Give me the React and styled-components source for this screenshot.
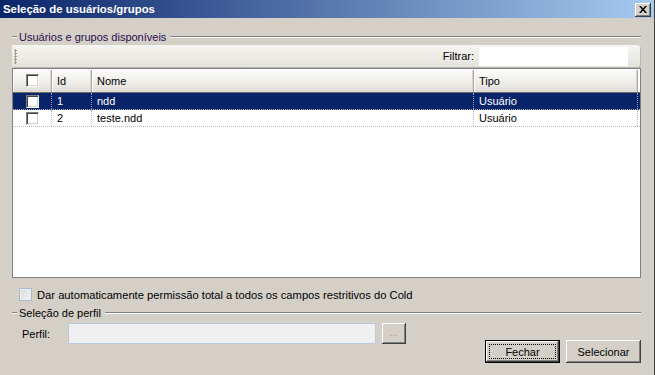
import React from 'react';
import styled, { createGlobalStyle, css } from 'styled-components';

const FACE = '#d4d0c8';
const SELECTED = '#0a246a';

const GlobalStyle = createGlobalStyle`
  html, body {
    margin: 0;
    padding: 0;
    background: ${FACE};
  }
  body {
    font-family: "Liberation Sans", Arial, sans-serif;
    font-size: 11px;
    color: #000;
  }
`;

const raised = css`
  box-shadow: inset -1px -1px #404040, inset 1px 1px #fff,
    inset -2px -2px #808080, inset 2px 2px ${FACE};
`;

const Window = styled.div`
  width: 655px;
  height: 375px;
  box-sizing: border-box;
  background: ${FACE};
  border-right: 1px solid #404040;
  display: flex;
  flex-direction: column;
  overflow: hidden;
`;

const TitleBar = styled.div`
  height: 18px;
  flex: none;
  display: flex;
  align-items: center;
  justify-content: space-between;
  padding: 0 3px 0 3px;
  background: linear-gradient(to right, #0a246a, #a6caf0);
`;

const Title = styled.span`
  color: #fff;
  font-weight: bold;
  font-size: 11.4px;
`;

const CloseButton = styled.div`
  width: 16px;
  height: 14px;
  background: ${FACE};
  ${raised};
  display: flex;
  align-items: center;
  justify-content: center;
  margin-top: 1px;
`;

const Body = styled.div`
  flex: 1;
  display: flex;
  flex-direction: column;
  padding: 12px 13px 0 12px;
`;

const GroupHeader = styled.div`
  display: flex;
  align-items: center;
  height: 14px;
  gap: 2px;
  color: ${p => p.$tint || '#000'};

  &::before {
    content: '';
    width: 5px;
    border-top: 1px solid #808080;
    border-bottom: 1px solid #fff;
  }

  &::after {
    content: '';
    flex: 1;
    margin-left: 2px;
    border-top: 1px solid #808080;
    border-bottom: 1px solid #fff;
  }
`;

const ToolStrip = styled.div`
  margin-top: 1px;
  height: 22px;
  display: flex;
  align-items: center;
  justify-content: space-between;
  background: linear-gradient(to bottom, #f6f5f1, #e4e2db);
  border-radius: 0 3px 3px 0;
  box-shadow: 1px 1px 0 #b8b5ac;
  margin-right: 1px;
`;

const Grip = styled.div`
  width: 3px;
  height: 15px;
  margin-left: 2px;
  background: radial-gradient(circle, #a09d94 1px, transparent 1.2px) 0 0 / 3px 3px;
`;

const FilterGroup = styled.div`
  display: flex;
  align-items: center;
  gap: 5px;
  padding-right: 12px;
`;

const FilterInput = styled.div`
  width: 149px;
  height: 19px;
  background: #fff;
`;

const Grid = styled.div`
  height: 210px;
  box-sizing: border-box;
  margin-top: 1px;
  border: 1px solid #808080;
  background: #fff;
  display: flex;
  flex-direction: column;
`;

const COLS = '39px 40px 382px 164px';

const HeaderRow = styled.div`
  display: grid;
  grid-template-columns: ${COLS};
  height: 23px;
  border-bottom: 1px solid #6e6d68;
`;

const HeaderCell = styled.div`
  display: flex;
  align-items: center;
  justify-content: ${p => (p.$center ? 'center' : 'flex-start')};
  padding-left: ${p => (p.$center ? 0 : '5px')};
  background: linear-gradient(to bottom, #fdfdfc, #ebe9e3 70%, #dedcd5);
  box-shadow: inset 1px 1px #fff, inset -1px 0 #a7a59e, inset -2px 0 #d9d7d0;
`;

const Row = styled.div`
  display: grid;
  grid-template-columns: ${COLS};
  height: 16px;
  background: ${p => (p.$selected ? SELECTED : '#fff')};
  color: ${p => (p.$selected ? '#fff' : '#000')};
  border-bottom: 1px dotted #b8b8b8;
`;

const Cell = styled.div`
  display: flex;
  align-items: center;
  justify-content: ${p => (p.$center ? 'center' : 'flex-start')};
  padding-left: ${p => (p.$center ? 0 : '5px')};
  border-right: 1px dotted ${p => (p.$selected ? '#9aa4c8' : '#b8b8b8')};
`;

const CheckBox = styled.span`
  display: inline-block;
  width: 11px;
  height: 11px;
  background: #fff;
  border: 1px solid;
  border-color: #808080 #fff #fff #808080;
  box-shadow: inset 1px 1px #404040, inset -1px -1px ${FACE};
`;

const FlatCheck = styled.span`
  display: inline-block;
  box-sizing: border-box;
  width: 13px;
  height: 13px;
  border: 1px solid #a8b8d0;
  background: linear-gradient(135deg, #d8d8d8, #f4f4f4);
  box-shadow: inset 0 0 0 1px #eef0f4;
`;

const OptionRow = styled.label`
  display: flex;
  align-items: center;
  gap: 5px;
  margin: 10px 0 0 7px;
  height: 13px;
  font-size: 11.2px;
`;

const SecondHeader = styled(GroupHeader)`
  margin-top: 5px;
`;

const BottomArea = styled.div`
  display: flex;
  justify-content: space-between;
  align-items: flex-start;
  margin-top: 3px;
`;

const ProfileRow = styled.div`
  display: flex;
  align-items: center;
  padding-left: 10px;
`;

const ProfileLabel = styled.span`
  width: 46px;
`;

const ProfileInput = styled.div`
  width: 306px;
  height: 19px;
  background: #efefef;
  border: 1px solid #b9c9de;
`;

const SmallButton = styled.div`
  margin-left: 6px;
  width: 24px;
  height: 21px;
  background: ${FACE};
  ${raised};
  color: #a09c94;
  font-size: 9px;
  line-height: 21px;
  text-align: center;
`;

const Buttons = styled.div`
  display: flex;
  gap: 6px;
  margin-top: 17px;
`;

const Button = styled.div`
  position: relative;
  width: 75px;
  height: 23px;
  box-sizing: border-box;
  display: flex;
  align-items: center;
  justify-content: center;
  background: ${FACE};
  ${raised};

  ${p =>
    p.$default &&
    css`
      border: 1px solid #000;
      &::after {
        content: '';
        position: absolute;
        inset: 3px;
        border: 1px dotted #000;
      }
    `}
`;

const rows = [
  { id: 1, nome: 'ndd', tipo: 'Usuário', selected: true },
  { id: 2, nome: 'teste.ndd', tipo: 'Usuário' },
];

export default function App() {
  return (
    <>
      <GlobalStyle />
      <Window>
        <TitleBar>
          <Title>Seleção de usuários/grupos</Title>
          <CloseButton>
            <svg width="8" height="7" viewBox="0 0 8 7">
              <path d="M0 0h2l2 2.5L6 0h2L5 3.5 8 7H6L4 4.5 2 7H0l3-3.5z" fill="#000" />
            </svg>
          </CloseButton>
        </TitleBar>
        <Body>
          <GroupHeader $tint="#2a0e4e">Usuários e grupos disponíveis</GroupHeader>
          <ToolStrip>
            <Grip />
            <FilterGroup>
              <span>Filtrar:</span>
              <FilterInput />
            </FilterGroup>
          </ToolStrip>
          <Grid>
            <HeaderRow>
              <HeaderCell $center>
                <CheckBox />
              </HeaderCell>
              <HeaderCell>Id</HeaderCell>
              <HeaderCell>Nome</HeaderCell>
              <HeaderCell>Tipo</HeaderCell>
            </HeaderRow>
            {rows.map(r => (
              <Row key={r.id} $selected={r.selected}>
                <Cell $center $selected={r.selected}>
                  <CheckBox />
                </Cell>
                <Cell $selected={r.selected}>{r.id}</Cell>
                <Cell $selected={r.selected}>{r.nome}</Cell>
                <Cell $selected={r.selected}>{r.tipo}</Cell>
              </Row>
            ))}
          </Grid>
          <OptionRow>
            <FlatCheck />
            <span>Dar automaticamente permissão total a todos os campos restritivos do Cold</span>
          </OptionRow>
          <SecondHeader>Seleção de perfil</SecondHeader>
          <BottomArea>
            <ProfileRow>
              <ProfileLabel>Perfil:</ProfileLabel>
              <ProfileInput />
              <SmallButton>...</SmallButton>
            </ProfileRow>
            <Buttons>
              <Button $default>Fechar</Button>
              <Button>Selecionar</Button>
            </Buttons>
          </BottomArea>
        </Body>
      </Window>
    </>
  );
}
